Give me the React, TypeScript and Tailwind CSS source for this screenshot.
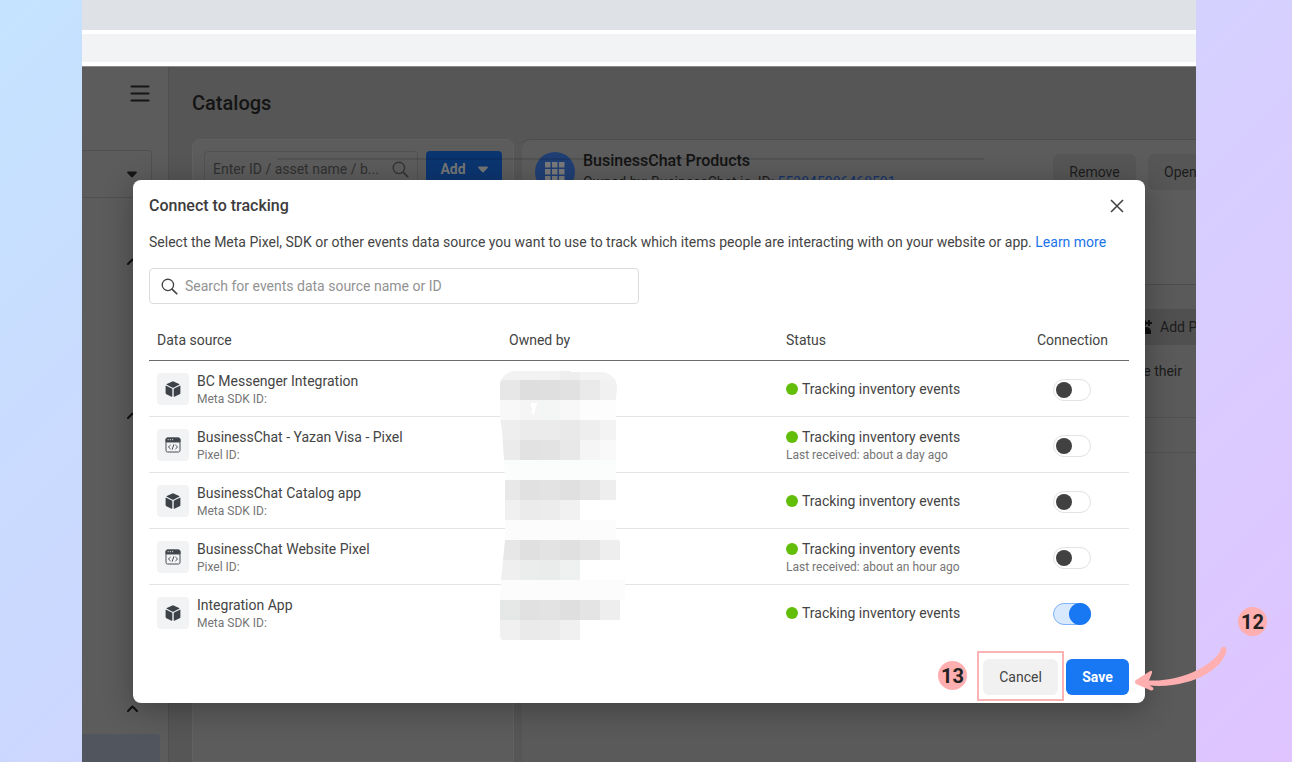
import React from "react";

type Source = { name: string; kind: "sdk" | "pixel"; last?: string; on?: boolean };

const sources: Source[] = [
  { name: "BC Messenger Integration", kind: "sdk" },
  { name: "BusinessChat - Yazan Visa - Pixel", kind: "pixel", last: "Last received: about a day ago" },
  { name: "BusinessChat Catalog app", kind: "sdk" },
  { name: "BusinessChat Website Pixel", kind: "pixel", last: "Last received: about an hour ago" },
  { name: "Integration App", kind: "sdk", on: true },
];

function Cube() {
  return (
    <svg className="size-4" viewBox="0 0 16 16" fill="#3c4248" aria-hidden="true">
      <path d="M7.4.4a1.5 1.5 0 0 1 1.2 0l5.6 2.6c.4.2.4.6 0 .8L8.5 6.7a1.2 1.2 0 0 1-1 0L1.8 3.8c-.4-.2-.4-.6 0-.8z" />
      <path d="M.6 5.1c0-.4.3-.5.6-.4l5.6 2.8c.3.2.5.4.5.8v7c0 .4-.3.6-.7.4l-5.2-2.5a1.4 1.4 0 0 1-.8-1.3z" />
      <path d="M15.4 5.1c0-.4-.3-.5-.6-.4L9.2 7.5c-.3.2-.5.4-.5.8v7c0 .4.3.6.7.4l5.2-2.5a1.4 1.4 0 0 0 .8-1.3z" />
    </svg>
  );
}

function CodeWindow() {
  return (
    <svg className="size-4" viewBox="0 0 16 16" fill="none" stroke="#4a4f55" aria-hidden="true">
      <rect x="1" y="1" width="14" height="14" rx="1.5" strokeWidth="1" />
      <path d="M1 2.5A1.5 1.5 0 0 1 2.5 1h11A1.5 1.5 0 0 1 15 2.5V5H1z" fill="#3c4248" />
      <path d="M2.6 2.7h1.2M4.8 2.7h1.2M7 2.7h1.2" stroke="#fff" strokeWidth=".8" />
      <path d="M5.6 8 3.4 10l2.2 2M10.4 8l2.2 2-2.2 2M8.9 7.3l-1.8 5.4" strokeWidth="1" />
    </svg>
  );
}

function Magnifier({ className }: { className: string }) {
  return (
    <svg className={className} viewBox="0 0 18 18" fill="none" stroke="currentColor" aria-hidden="true">
      <circle cx="7.3" cy="7.3" r="6" strokeWidth="1.4" />
      <path d="m11.7 11.7 5 5" strokeWidth="1.8" strokeLinecap="round" />
    </svg>
  );
}

function Caret({ className }: { className: string }) {
  return (
    <svg className={className} viewBox="0 0 10 7" fill="currentColor" aria-hidden="true">
      <path d="M1 .5h8c.8 0 1.2.8.6 1.4L5.900 6.100c-.5.6-1.300.6-1.800 0L.4 1.900C-.2 1.300.2.5 1 .5z" />
    </svg>
  );
}

function Chevron() {
  return (
    <svg className="h-[7px] w-[11px]" viewBox="0 0 11 7" fill="none" stroke="#111" strokeWidth="2" aria-hidden="true">
      <path d="m1 6 4.500-4.500L10 6" strokeLinecap="round" strokeLinejoin="round" />
    </svg>
  );
}

/* Pixelated cover over the owner names: one entry per band, one fill per cell. */
const cellWidth = 20;
const mosaic: { y: number; h: number; fills: string[] }[] = [
  { y: 0, h: 9, fills: ["#f2f2f2", "#f2f2f2", "#f2f2f2", "#eeeeee", "#f3f3f3", "#f3f3f3"] },
  { y: 9, h: 20, fills: ["#e7e7e7", "#dedede", "#dfdfdf", "#e1e1e1", "#eaeaea", "#f1f1f1"] },
  { y: 29, h: 20, fills: ["#f8f8f8", "#f5f5f5", "#f4f6f5", "#f8f8f8", "#fdfdfd", "#fdfdfd"] },
  { y: 49, h: 20, fills: ["#eeeeee", "#ebebeb", "#ebebeb", "#e9e9e9", "#eeeeee", "#f3f3f3"] },
  { y: 69, h: 20, fills: ["#ebebeb", "#e2e2e2", "#e3e3e3", "#e8e8e8", "#f5f5f5", "#f9f9f9"] },
  { y: 89, h: 20, fills: ["#fbfdfc", "#fbfdfc", "#fbfdfc", "#fbfdfc", "#fbfdfc", "#fbfdfc"] },
  { y: 109, h: 20, fills: ["#e8e8e8", "#e1e1e1", "#e3e3e3", "#e0e0e0", "#e5e5e5", "#eeeeee"] },
  { y: 129, h: 20, fills: ["#f0f0f0", "#ebebeb", "#ececec", "#f1f1f1", "#ffffff", "#ffffff"] },
  { y: 149, h: 20, fills: ["#fcfcfc", "#fcfcfc", "#fcfcfc", "#fcfcfc", "#fcfcfc", "#fcfcfc"] },
  { y: 169, h: 20, fills: ["#e7e7e7", "#e0e0e0", "#e3e3e3", "#e0e0e0", "#e5e5e5", "#eeeeee"] },
  { y: 189, h: 20, fills: ["#efefef", "#ebecec", "#e9ecea", "#eef1f0", "#ffffff", "#ffffff"] },
  { y: 209, h: 20, fills: ["#fcfcfc", "#fcfcfc", "#fcfcfc", "#fcfcfc", "#fcfcfc", "#fcfcfc", "#fcfcfc"] },
  { y: 229, h: 20, fills: ["#e6e8e7", "#e1e1e1", "#e3e3e3", "#dfdfdf", "#e4e4e4", "#eeeeee"] },
  { y: 249, h: 20, fills: ["#f0f0f0", "#eaeaea", "#ebebeb", "#f0f0f0", "#ffffff", "#ffffff"] },
];

function OwnerCover() {
  return (
    <svg className="pointer-events-none absolute top-[191px] left-[367px] h-[269px] w-[126px]" viewBox="0 0 126 269" shapeRendering="crispEdges" aria-hidden="true">
      <clipPath id="cover">
        <path d="M14 0h57v1h32q14 3 14 16l-1 10v140l4 3v20h5v39h-5v40H2l-2-3v-37l1-20 2-20 2-20v-60l-1-20-2-30-2-12V12Q3 2 14 0z" />
      </clipPath>
      <g clipPath="url(#cover)">
        {mosaic.map((r) =>
          r.fills.map((f, i) => <rect key={r.y + "-" + i} x={i * cellWidth} y={r.y} width={cellWidth} height={r.h} fill={f} />),
        )}
        <path d="M31 32h6l-4 14z" fill="#fff" />
      </g>
    </svg>
  );
}

function Toggle({ label, on }: { label: string; on?: boolean }) {
  return (
    <label className="relative mt-1 ml-4 block h-[22px] w-[38px] cursor-pointer">
      <input type="checkbox" role="switch" aria-label={label} defaultChecked={on} className="peer sr-only" />
      <span className="block h-full rounded-full border border-[#e2e2e2] bg-white peer-checked:border-[#7fb3f8] peer-checked:bg-[#d8e8fd]" />
      <span className="absolute top-[3px] left-[3px] size-4 rounded-full bg-[#414141] peer-checked:top-0 peer-checked:left-4 peer-checked:size-[22px] peer-checked:bg-[#1877f2]" />
    </label>
  );
}

function Step({ n, className }: { n: number; className: string }) {
  return (
    <span className={"absolute flex size-[29px] items-center justify-center rounded-full bg-[#ffafaf] text-xl font-bold text-[#222] " + className}>{n}</span>
  );
}

function Backdrop() {
  return (
    <div className="flex min-h-0 flex-1 overflow-hidden border-t border-[#8a8a8a] bg-[#565656] text-sm text-[#1c1c1c]">
      <aside className="flex w-[87px] shrink-0 flex-col border-r border-[#4f4f4f] bg-[#5c5c5c]">
        <button aria-label="Menu" className="mt-[18px] mr-[18px] self-end">
          <svg className="h-[17px] w-5" viewBox="0 0 20 17" stroke="#151515" strokeWidth="2" strokeLinecap="round" aria-hidden="true">
            <path d="M1.500 1.500h17M1.500 8.500h17M1.500 15.500h17" />
          </svg>
        </button>
        <div className="mt-12 mr-4 flex h-12 shrink-0 items-center justify-end rounded-tr border-t border-r border-b border-[#505050] pr-3.5">
          <Caret className="h-[7px] w-2.5 text-[#151515]" />
        </div>
        <div className="mt-[60px] flex flex-col items-end pr-[30px]">
          <Chevron />
        </div>
        <div className="mt-[147px] flex flex-col items-end pr-[30px]">
          <Chevron />
        </div>
        <div className="mt-[286px] flex flex-col items-end pr-[30px]">
          <Chevron />
        </div>
        <div className="mt-[22px] mr-2 h-10 shrink-0 rounded-tr bg-[#50555e]" />
      </aside>
      <main className="flex min-w-0 flex-1 flex-col pl-[23px]">
        <h1 className="mt-6 text-xl leading-6 font-medium text-[#141414]">Catalogs</h1>
        <div className="mt-6 flex min-h-0 flex-1 gap-2">
          <section className="flex w-[322px] shrink-0 items-start gap-2 rounded-t-lg border border-[#616161] bg-[#5c5c5c] p-[11px]">
            <div className="flex h-9 min-w-0 flex-1 items-center rounded border border-[#515151] px-2">
              <input aria-label="Enter ID / asset name" placeholder="Enter ID / asset name / b..." className="min-w-0 flex-1 placeholder:text-[#303030]" />
              <Magnifier className="size-[17px] shrink-0 text-[#333]" />
            </div>
            <button className="flex h-9 w-[76px] shrink-0 items-center justify-center gap-3 rounded bg-[#0b3570] font-bold text-[#757575]">
              Add <Caret className="h-[7px] w-2.5" />
            </button>
          </section>
          <div className="flex min-w-0 flex-1 flex-col">
            <section className="flex h-[146px] shrink-0 items-start gap-2 rounded-tl-lg border-t border-b border-[#4d4d4d] bg-[#5c5c5c] pt-3 pl-[13px]">
              <span className="flex size-10 shrink-0 items-center justify-center rounded-full bg-[#203f74]">
                <svg className="size-5" viewBox="0 0 20 20" fill="#7a7a7a" aria-hidden="true">
                  <path d="M0 0h5.500v5.500H0zM7 0h5.500v5.500H7zM14 0h5.500v5.500H14zM0 7h5.500v5.500H0zM7 7h5.500v5.500H7zM14 7h5.500v5.500H14zM0 14h5.500v5.500H0zM7 14h5.500v5.500H7zM14 14h5.500v5.500H14z" />
                </svg>
              </span>
              <div className="min-w-0 flex-1 whitespace-nowrap">
                <h2 className="text-base leading-[18px] font-medium text-[#141414]">BusinessChat Products</h2>
                <p className="mt-0.5 leading-5">
                  Owned by: BusinessChat io, ID: <a href="#id" className="text-[#12336b]">553845086468591</a>
                </p>
              </div>
              <div className="mt-0.5 -mr-8 flex shrink-0 gap-3">
                <button className="h-9 w-[83px] rounded-md bg-[#565656]">Remove</button>
                <button className="h-9 w-20 rounded-md bg-[#565656] pl-4 text-left">Open</button>
              </div>
            </section>
            <section className="flex min-h-0 flex-1 flex-col items-end bg-[#5a5a5a] pt-6">
              <button className="flex h-9 w-[100px] shrink-0 items-center gap-2 bg-[#505050] pl-10 text-left whitespace-nowrap">
                <svg className="size-4 shrink-0" viewBox="0 0 16 16" fill="#111" aria-hidden="true">
                  <circle cx="7" cy="4" r="3.500" />
                  <path d="M1 15v-3a5 5 0 0 1 5-4h4a5 5 0 0 1 5 4v3zM12 1h2v6h-2zM10 3h6v2h-6z" />
                </svg>
                Add P
              </button>
              <p className="mt-4 pr-3.5 leading-5">e their</p>
              <div className="mt-9 h-9 w-full shrink-0 border-t border-b border-[#505050]" />
            </section>
          </div>
        </div>
      </main>
    </div>
  );
}

function Dialog() {
  return (
    <section role="dialog" aria-labelledby="dialog-title" className="relative rounded-lg bg-white px-4 pt-4 pb-2 text-[#444] shadow-[0_6px_30px_rgba(0,0,0,0.3)]">
      <header className="flex h-5 items-center justify-between">
        <h2 id="dialog-title" className="text-base font-medium text-[#3c3c3c]">Connect to tracking</h2>
        <button aria-label="Close" className="mr-[5px]">
          <svg className="size-3.5" viewBox="0 0 14 14" stroke="#444" strokeWidth="1.600" aria-hidden="true">
            <path d="m1 1 12 12M13 1 1 13" />
          </svg>
        </button>
      </header>
      <p className="mt-4 text-sm leading-5">
        Select the Meta Pixel, SDK or other events data source you want to use to track which items people are interacting with on your website or app.{" "}
        <a href="#learn" className="text-[#1a73e8]">Learn more</a>
      </p>
      <label className="mt-4 flex h-9 w-1/2 items-center gap-[7px] rounded border border-[#dcdcdc] px-[11px]">
        <Magnifier className="size-[17px] shrink-0 text-[#444]" />
        <input aria-label="Search" placeholder="Search for events data source name or ID" className="flex-1 text-sm outline-none placeholder:text-[#929292]" />
      </label>
      <table className="mt-4 w-full table-fixed text-left text-sm">
        <colgroup>
          <col />
          <col className="w-[277px]" />
          <col className="w-[251px]" />
          <col className="w-[100px]" />
        </colgroup>
        <thead>
          <tr className="h-10 border-b border-[#6a6a6a]">
            {["Data source", "Owned by", "Status", "Connection"].map((h) => (
              <th key={h} className="px-2 font-normal">{h}</th>
            ))}
          </tr>
        </thead>
        <tbody>
          {sources.map((s) => (
            <tr key={s.name} className="h-14 border-b border-[#e3e4e6] last:border-0">
              <td className="px-2 pt-0.5">
                <div className="flex items-center gap-2">
                  <span className="flex size-8 items-center justify-center rounded bg-[#f2f3f5]">{s.kind === "sdk" ? <Cube /> : <CodeWindow />}</span>
                  <div>
                    <div className="leading-5">{s.name}</div>
                    <div className="text-xs leading-4 text-[#757575]">{s.kind === "sdk" ? "Meta SDK ID:" : "Pixel ID:"}</div>
                  </div>
                </div>
              </td>
              <td />
              <td className="px-2 pt-0.5">
                <div className="flex items-center gap-1 leading-5">
                  <span className="size-3 rounded-full bg-[#63be09]" />
                  Tracking inventory events
                </div>
                {s.last && <div className="text-xs leading-4 text-[#757575]">{s.last}</div>}
              </td>
              <td className="px-2">
                <Toggle label={"Connect " + s.name} on={s.on} />
              </td>
            </tr>
          ))}
        </tbody>
      </table>
      <OwnerCover />
      <footer className="mt-[19px] flex h-9 justify-end gap-2">
        <div className="relative">
          <button className="h-9 w-[75px] rounded-md bg-[#f1f1f1] text-sm">Cancel</button>
          <span className="pointer-events-none absolute -inset-x-1.5 -top-2 -bottom-1.5 border-2 border-[#fbb3b3]" />
          <Step n={13} className="top-0.5 right-[91px]" />
        </div>
        <button className="h-9 w-[63px] rounded-md bg-[#1877f2] text-sm font-bold text-white">Save</button>
      </footer>
    </section>
  );
}

export default function App() {
  return (
    <div className="relative flex h-screen overflow-hidden bg-[linear-gradient(135deg,#c5e3ff_0%,#ccd7ff_37%,#d6d0ff_63%,#dfc4ff_100%)] pr-24 pl-[82px] font-['Roboto',sans-serif]">
      <div className="relative flex min-w-0 flex-1 flex-col bg-white">
        <div className="h-[30px] shrink-0 bg-[#dee1e6]" />
        <div className="my-1 h-7 shrink-0 bg-[#f1f3f4]" />
        <Backdrop />
        <div className="absolute top-[158px] right-[212px] left-[195px] h-0.5 bg-black/10" />
        <div className="absolute inset-x-0 top-[180px] px-[51px]">
          <Dialog />
        </div>
      </div>
      <Step n={12} className="top-[607px] right-[25px]" />
      <svg className="pointer-events-none absolute top-[640px] right-[60px] h-[60px] w-[100px]" viewBox="0 0 100 60" fill="#ffafaf" aria-hidden="true">
        <path d="M4 40Q2 42 4 44L19 50.500Q22.500 50.500 21 47.500L17.500 45.500C60 49 92 28 94.500 10C94.500 5.500 90 6 89 9C84 24 50 42 17 40.500L20 33Q20.500 29.500 17.500 31.500Z" />
      </svg>
    </div>
  );
}
